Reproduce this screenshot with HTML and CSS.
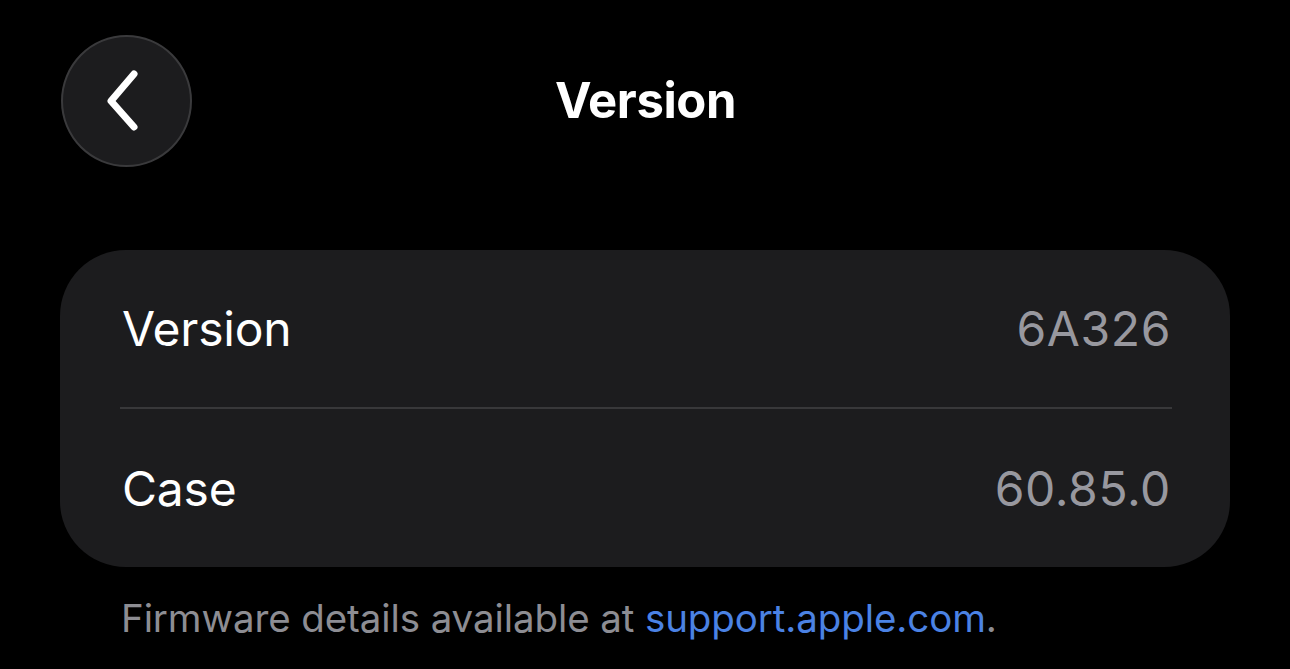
FILE: index.html
```html
<!DOCTYPE html>
<html lang="en">
<head>
<meta charset="utf-8">
<title>Version</title>
<link rel="stylesheet" href="styles.css">
</head>
<body>
<header class="nav">
  <button class="back" aria-label="Back">
    <svg viewBox="0 0 40 64" width="40" height="64" class="chev">
      <path d="M31 5 L8 32 L31 58" fill="none" stroke="#fff" stroke-width="7" stroke-linecap="round" stroke-linejoin="round"/>
    </svg>
  </button>
  <h1 class="title">Version</h1>
  <div class="spacer"></div>
</header>
<main class="content">
  <section class="card">
    <div class="row">
      <span class="label">Version</span>
      <span class="value">6A326</span>
    </div>
    <div class="divider"></div>
    <div class="row">
      <span class="label">Case</span>
      <span class="value">60.85.0</span>
    </div>
  </section>
  <p class="footnote">Firmware details available at <a class="link" href="#">support.apple.com</a>.</p>
</main>
</body>
</html>
```
FILE: styles.css
```css
html, body {
  margin: 0;
  padding: 0;
  background: #000;
  height: 100%;
}
body {
  font-family: Inter, "Noto Sans", sans-serif;
  color: #fff;
  overflow: hidden;
}
.nav {
  display: grid;
  grid-template-columns: 1fr auto 1fr;
  align-items: center;
  padding: 35px 60px 0 61px;
  height: 132px;
  box-sizing: content-box;
}
.back {
  width: 131px;
  height: 132px;
  border-radius: 50%;
  background: #1c1c1e;
  border: 2px solid #3a3a3c;
  display: flex;
  align-items: center;
  justify-content: center;
  padding: 0;
  padding-right: 8px;
  box-sizing: border-box;
  justify-self: start;
}
.chev {
  display: block;
}
.title {
  margin: 0;
  font-size: 49px;
  font-weight: 700;
  letter-spacing: -0.4px;
  line-height: 1;
  padding-bottom: 2px;
}
.content {
  padding: 83px 60px 0 60px;
}
.card {
  background: #1c1c1e;
  border-radius: 66px;
  padding: 0 60px 0 62px;
}
.row {
  display: flex;
  justify-content: space-between;
  align-items: center;
  height: 157px;
  font-size: 48px;
  letter-spacing: -0.2px;
}
.row:last-child {
  height: 158px;
}
.label {
  color: #fff;
}
.value {
  color: #98989f;
  letter-spacing: 0.6px;
  margin-right: -1px;
}
.divider {
  height: 2px;
  background: #38383a;
  margin-right: -2px;
  margin-left: -2px;
}
.footnote {
  margin: 28px 0 0 61px;
  font-size: 38.5px;
  color: #8d8d93;
  letter-spacing: -0.1px;
}
.link {
  color: #4b82e4;
  text-decoration: none;
}
```
